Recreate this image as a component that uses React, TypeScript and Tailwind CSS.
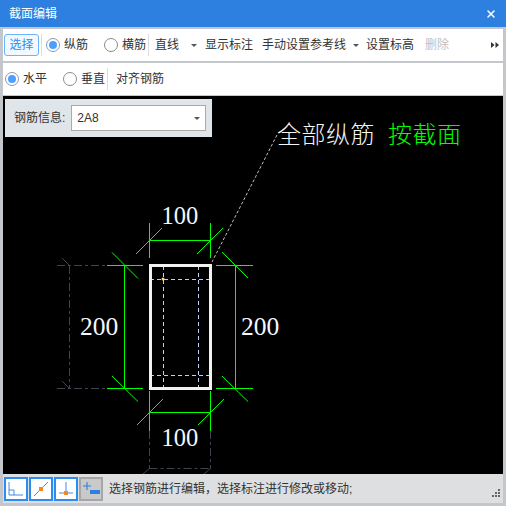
import { X } from "lucide-react";

const font = "font-['Liberation_Sans','Noto_Sans_CJK_SC',sans-serif]";

function Radio({ checked, label, className }: { checked?: boolean; label: string; className?: string }) {
  return (
    <div className={`flex items-center gap-[4px] ${className ?? ""}`}>
      <span
        className={`flex h-[14px] w-[14px] items-center justify-center rounded-full border ${
          checked ? "border-[#8a9bb0]" : "border-[#8c8c8c]"
        } bg-white`}
      >
        {checked && <span className="h-[8px] w-[8px] rounded-full bg-[#4d9fff]" />}
      </span>
      <span className="text-[12px] leading-none text-[#333]">{label}</span>
    </div>
  );
}

function Caret({ className }: { className?: string }) {
  return <span className={`h-0 w-0 border-x-[3px] border-t-[3px] border-x-transparent border-t-[#555] ${className ?? ""}`} />;
}

// 截面图：坐标直接取页面坐标
function Section() {
  const green = "#00ff00";
  const grey = "#3d4350";
  const blue = "#b8d4f8";
  const greenLines = [
    [149.5, 223, 149.5, 258],
    [210.5, 223, 210.5, 258],
    [149.5, 240.5, 210.5, 240.5],
    [136, 254, 162, 228],
    [197, 254, 223, 228],
    [107, 265.5, 143, 265.5],
    [107, 388.5, 143, 388.5],
    [124.5, 265, 124.5, 388],
    [112, 252.5, 138, 278.5],
    [112, 376, 138, 401.5],
    [216, 265.5, 253, 265.5],
    [216, 388.5, 253, 388.5],
    [235.5, 265, 235.5, 388],
    [222, 252, 248, 278],
    [222, 376, 248, 401.5],
    [149.5, 391, 149.5, 431],
    [210.5, 391, 210.5, 431],
    [149.5, 412.5, 210.5, 412.5],
    [137, 425, 163, 399],
    [198, 425, 224, 399],
  ];
  return (
    <svg viewBox="3 96 500 378" className="block h-full w-full">
      <path d="M277 135 L212 262" stroke="#bdbdbd" strokeDasharray="3 2" fill="none" />
      <g stroke={grey} fill="none" strokeDasharray="8 3 3 3">
        <path d="M57 265.5 H106 M57 388.5 H106 M69.5 266 V388 M149.5 431 V468.5 M210.5 431 V468.5 M149.5 468.5 H210.5" />
      </g>
      <g stroke={grey} fill="none">
        <path d="M62 258 L70 266 M62 381 L70 389 M143 474 L150 468 M204 474 L211 468" />
      </g>
      <g stroke={blue} fill="none" strokeDasharray="4 3">
        <path d="M163.5 266 V388 M198.5 266 V388 M150 279.5 H210 M150 375.5 H210" />
      </g>
      <rect x={150.5} y={265.5} width={60} height={123} fill="none" stroke="#f2f2f2" strokeWidth={3} />
      <circle cx={163} cy={279} r={1.5} fill="#ffe14d" />
      <g stroke={green} strokeWidth={1}>
        {greenLines.map((l, i) => (
          <line key={i} x1={l[0]} y1={l[1]} x2={l[2]} y2={l[3]} />
        ))}
      </g>
      <g fill="#f4f8ff" fontFamily="'Liberation Serif', serif">
        <text x={161.5} y={223.5} fontSize={24.5}>100</text>
        <text x={161.5} y={446} fontSize={24.5}>100</text>
        <text x={80} y={335} fontSize={25.5}>200</text>
        <text x={241} y={335} fontSize={25.5}>200</text>
      </g>
      <g fontSize={24} fontWeight={300} letterSpacing={0.5} fontFamily="'Noto Sans CJK SC', sans-serif">
        <text x={277} y={143} fill="#f4f4f4">全部纵筋</text>
        <text x={388} y={143} fill="#00ff00">按截面</text>
      </g>
    </svg>
  );
}

function ToolIcon({ children, active = true }: { children: React.ReactNode; active?: boolean }) {
  return (
    <div
      className={`h-[24px] w-[24px] border-2 ${
        active ? "border-[#2d8cf0] bg-white" : "border-[#a6a6a6] bg-[#c9c9c9]"
      }`}
    >
      <svg viewBox="0 0 20 20" className="h-full w-full">
        {children}
      </svg>
    </div>
  );
}

export default function App() {
  return (
    <div className={`flex h-[506px] w-[506px] flex-col overflow-hidden bg-[#c3c7cc] ${font}`}>
      {/* 标题栏 */}
      <div className="flex h-[27px] shrink-0 items-center justify-between bg-[#2d7fe0] pl-[9px] pr-[9px]">
        <span className="text-[12px] text-white">截面编辑</span>
        <X className="h-[12px] w-[12px] text-white" strokeWidth={3} />
      </div>

      <div className="flex min-h-0 flex-1 flex-col gap-[2px] pt-[2px] pl-[3px] pr-[3px] pb-[3px]">
        {/* 工具栏 1 */}
        <div className="flex h-[32px] shrink-0 items-center bg-white pl-[1px] text-[12px] text-[#333]">
          <div className="flex h-[22px] w-[35px] items-center justify-center rounded-[3px] border border-[#6db3f8] bg-[#f2f8ff] text-[#2d8cf0]">
            选择
          </div>
          <span className="ml-[2px] h-[22px] w-px bg-[#ddd]" />
          <Radio checked label="纵筋" className="ml-[4px]" />
          <Radio label="横筋" className="ml-[16px]" />
          <span className="ml-[2px] h-[22px] w-px bg-[#ddd]" />
          <div className="ml-[3px] flex h-[22px] w-[44px] items-center rounded-[3px] pl-[3px]">直线</div>
          <Caret className="-ml-[5px]" />
          <span className="ml-[8px]">显示标注</span>
          <span className="ml-[9px]">手动设置参考线</span>
          <Caret className="ml-[7px]" />
          <span className="ml-[7px]">设置标高</span>
          <span className="ml-[11px] text-[#c0c0c0]">删除</span>
          <svg viewBox="0 0 8 6" className="ml-auto mr-[4px] h-[6px] w-[8px]">
            <path d="M0 0 L3.5 3 L0 6 Z M4.5 0 L8 3 L4.5 6 Z" fill="#333" />
          </svg>
        </div>

        {/* 工具栏 2 */}
        <div className="flex h-[32px] shrink-0 items-center bg-white pl-[2px] text-[12px] text-[#333]">
          <Radio checked label="水平" />
          <Radio label="垂直" className="ml-[16px]" />
          <span className="ml-[2px] h-[22px] w-px bg-[#ddd]" />
          <span className="ml-[8px]">对齐钢筋</span>
        </div>

        {/* 画布 */}
        <div className="relative min-h-0 flex-1 bg-black -mt-[1px]">
          <Section />
          <div className="absolute left-[2px] top-[3px] flex h-[38px] w-[207px] items-center bg-[#dfe5e8] pl-[9px] text-[12px] text-[#333]">
            <span>钢筋信息:</span>
            <div className="ml-[6px] flex h-[26px] w-[135px] items-center justify-between border border-[#aaa] bg-white px-[5px]">
              <span>2A8</span>
              <Caret />
            </div>
          </div>
        </div>

        {/* 状态栏 */}
        <div className="-mt-[2px] flex h-[29px] shrink-0 items-center bg-[#dedfe1] pl-[1px] pr-[3px]">
          <div className="flex gap-px">
            <ToolIcon>
              <path d="M3 3 V16 H17 M3 11 H8 V16" stroke="#2d7fe0" fill="none" strokeWidth={0.9} />
            </ToolIcon>
            <ToolIcon>
              <path d="M3 17 L17 3" stroke="#2d7fe0" fill="none" strokeWidth={0.9} />
              <rect x={8} y={8} width={4} height={4} fill="#f08a24" />
            </ToolIcon>
            <ToolIcon>
              <path d="M10 3 V14 M3 14 H17" stroke="#2d7fe0" fill="none" strokeWidth={0.9} />
              <rect x={8} y={12} width={4} height={4} fill="#f08a24" />
            </ToolIcon>
            <ToolIcon active={false}>
              <path d="M6 3 V11 M2 7 H10" stroke="#2d7fe0" fill="none" strokeWidth={1.1} />
              <rect x={9} y={11} width={10} height={4} fill="#2d7fe0" />
            </ToolIcon>
          </div>
          <span className="ml-[6px] text-[12px] text-[#333]">选择钢筋进行编辑，选择标注进行修改或移动;</span>
          <div className="ml-auto mt-[8px] grid grid-cols-3 gap-px">
            <span className="h-[2px] w-[2px]" />
            <span className="h-[2px] w-[2px]" />
            <span className="h-[2px] w-[2px] bg-[#666]" />
            <span className="h-[2px] w-[2px]" />
            <span className="h-[2px] w-[2px] bg-[#666]" />
            <span className="h-[2px] w-[2px] bg-[#666]" />
            <span className="h-[2px] w-[2px] bg-[#666]" />
            <span className="h-[2px] w-[2px] bg-[#666]" />
            <span className="h-[2px] w-[2px] bg-[#666]" />
          </div>
        </div>
      </div>
    </div>
  );
}
